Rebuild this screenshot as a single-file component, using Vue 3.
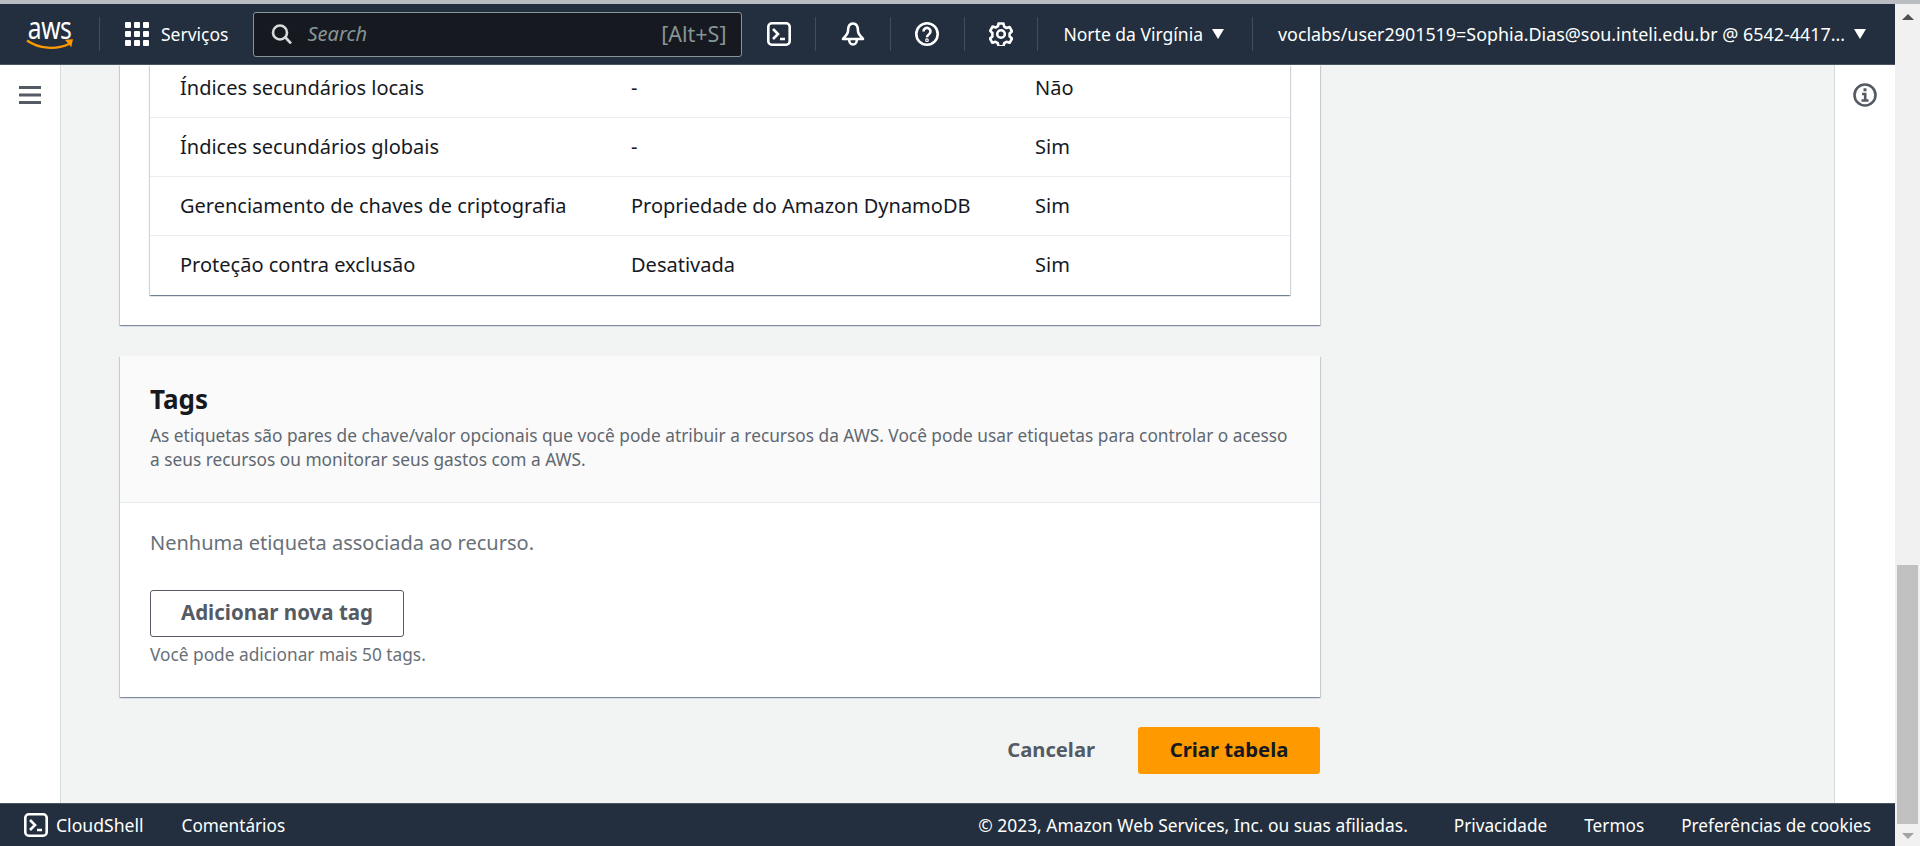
<template>
  <div class="page">
    <div class="strip" />
    <div class="shell">
      <div class="app">
        <header class="nav">
          <div class="logo">
            <span class="logo-txt">aws</span>
            <svg class="logo-smile" width="48" height="11" viewBox="0 0 48 11">
              <path d="M1 1.500c12 8.500 29 9.500 42 3.500" fill="none" stroke="#f90" stroke-width="2.200" />
              <path d="M39 .8l8-.6-1.800 8z" fill="#f90" />
            </svg>
          </div>
          <span class="sep sep-logo" />
          <svg class="grid-ic" width="24" height="24" viewBox="0 0 24 24" fill="#fff">
            <template v-for="y in [0, 9, 18]" :key="y">
              <rect v-for="x in [0, 9, 18]" :key="x" :x="x" :y="y" width="6" height="6" rx="1" />
            </template>
          </svg>
          <span class="nav-txt svc">Serviços</span>
          <div class="search">
            <svg width="22" height="20" viewBox="0 0 22 20" fill="none" stroke="#d5dbdb" stroke-width="2.600">
              <circle cx="9" cy="8.500" r="7" />
              <path d="M14 13l6 6.500" />
            </svg>
            <span class="search-ph">Search</span>
            <span class="search-key">[Alt+S]</span>
          </div>
          <svg class="ic ic-term" width="24" height="24" viewBox="0 0 24 24" fill="none" stroke="#fff" stroke-width="2.600">
            <rect x="1.300" y="1.300" width="21.400" height="21.400" rx="3.500" />
            <path d="M6 7l5 5-5 5M13 17h5" />
          </svg>
          <span class="sep sep-a" />
          <svg class="ic ic-bell" width="24" height="24" viewBox="0 0 24 24" fill="none" stroke="#fff" stroke-width="2.600">
            <path d="M12 1.500C8 1.500 7 5 7 9c0 3-2.500 5-5 8h20c-2.500-3-5-5-5-8 0-4-1-7.500-5-7.500z" stroke-linejoin="round" />
            <path d="M8.200 18a3.800 4.500 0 0 0 7.600 0" />
          </svg>
          <span class="sep sep-b" />
          <svg class="ic ic-help" width="24" height="24" viewBox="0 0 24 24" fill="none" stroke="#fff" stroke-width="2.600">
            <circle cx="12" cy="12" r="10.700" />
            <path d="M8.500 9.500a3.500 3.500 0 1 1 5.500 2.800c-1.300.9-2 1.500-2 3" />
            <circle cx="12" cy="18.200" r=".6" />
          </svg>
          <span class="sep sep-c" />
          <svg class="ic ic-gear" width="24" height="24" viewBox="0 0 24 24" fill="none" stroke="#fff" stroke-width="2.600">
            <circle cx="12" cy="12" r="3.800" />
            <path d="M9.500 1.500h5l.7 3.200 2.300 1.300 3.100-1 2.400 4.300-2.400 2.200v2.900l2.400 2.100-2.400 4.300-3.100-1-2.300 1.400-.7 3.200h-5l-.7-3.200-2.300-1.400-3.100 1-2.400-4.300 2.400-2.100V11L1.200 8.800l2.400-4.300 3.100 1L9 4.200z" stroke-linejoin="round" />
          </svg>
          <span class="sep sep-d" />
          <span class="nav-txt region">Norte da Virgínia</span>
          <span class="tri" />
          <span class="sep sep-e" />
          <span class="nav-txt account">voclabs/user2901519=Sophia.Dias@sou.inteli.edu.br @ 6542-4417...</span>
          <span class="tri" />
        </header>

        <div class="body">
          <aside class="rail rail-left">
            <svg width="22" height="18" viewBox="0 0 22 18" fill="#545b64">
              <rect width="22" height="3" />
              <rect y="7.500" width="22" height="3" />
              <rect y="15" width="22" height="3" />
            </svg>
          </aside>
          <main class="main">
            <section class="card card-settings">
              <div class="table">
                <div v-for="row in rows" :key="row[0]" class="row">
                  <span>{{ row[0] }}</span>
                  <span>{{ row[1] }}</span>
                  <span>{{ row[2] }}</span>
                </div>
              </div>
            </section>

            <section class="card card-tags">
              <div class="tags-head">
                <h2>Tags</h2>
                <p>As etiquetas são pares de chave/valor opcionais que você pode atribuir a recursos da AWS. Você pode usar etiquetas para controlar o acesso a seus recursos ou monitorar seus gastos com a AWS.</p>
              </div>
              <div class="tags-body">
                <p class="empty">Nenhuma etiqueta associada ao recurso.</p>
                <button type="button" class="btn-add">Adicionar nova tag</button>
                <p class="hint">Você pode adicionar mais 50 tags.</p>
              </div>
            </section>

            <div class="actions">
              <button type="button" class="btn-cancel">Cancelar</button>
              <button type="button" class="btn-create">Criar tabela</button>
            </div>
          </main>
          <aside class="rail rail-right">
            <svg width="24" height="24" viewBox="0 0 24 24" fill="none" stroke="#545b64" stroke-width="2.600">
              <circle cx="12" cy="12" r="10.500" />
              <path d="M9 11h3.200v6M8.500 17.500h7" />
              <path d="M10.500 6.800h3" stroke-width="3" />
            </svg>
          </aside>
        </div>

        <footer class="foot">
          <svg width="24" height="24" viewBox="0 0 24 24" fill="none" stroke="#fff" stroke-width="2.600">
            <rect x="1.300" y="1.300" width="21.400" height="21.400" rx="3.500" />
            <path d="M6 7l5 5-5 5M13 17h5" />
          </svg>
          <span class="f-shell">CloudShell</span>
          <span class="f-comments">Comentários</span>
          <span class="f-copy">© 2023, Amazon Web Services, Inc. ou suas afiliadas.</span>
          <span class="f-link f-first">Privacidade</span>
          <span class="f-link">Termos</span>
          <span class="f-link">Preferências de cookies</span>
        </footer>
      </div>

      <div class="scrollbar">
        <span class="arrow arrow-up" />
        <div class="track"><div class="thumb" /></div>
        <span class="arrow arrow-down" />
      </div>
    </div>
  </div>
</template>

<script setup>
const rows = [
  ['Índices secundários locais', '-', 'Não'],
  ['Índices secundários globais', '-', 'Sim'],
  ['Gerenciamento de chaves de criptografia', 'Propriedade do Amazon DynamoDB', 'Sim'],
  ['Proteção contra exclusão', 'Desativada', 'Sim'],
]
</script>

<style>
html, body { margin: 0; overflow: hidden; }
</style>

<style scoped>
.page {
  width: 1920px;
  height: 846px;
  display: flex;
  flex-direction: column;
  font-family: "Noto Sans", sans-serif;
  color: #16191f;
  overflow: hidden;
}
.strip {
  height: 4px;
  background: #b9bcc0;
  flex: none;
}
.shell {
  flex: 1;
  min-height: 0;
  display: flex;
}
.app {
  flex: 1;
  min-width: 0;
  display: flex;
  flex-direction: column;
}

/* barra superior */
.nav {
  height: 61px;
  flex: none;
  display: flex;
  align-items: center;
  background: #232f3e;
  color: #fff;
  border-bottom: 1px solid #4a5563;
  box-sizing: border-box;
}
.logo {
  margin-left: 26px;
  width: 48px;
  height: 32px;
  flex: none;
  display: flex;
  flex-direction: column;
  align-items: center;
}
.logo-txt {
  font-size: 30px;
  line-height: 20px;
  transform: scaleX(0.82);
  letter-spacing: -0.5px;
}
.logo-smile {
  margin-top: 1px;
  flex: none;
}
.sep {
  width: 1px;
  height: 34px;
  background: #414d5c;
  flex: none;
}
.sep-logo { margin-left: 25px; }
.grid-ic { margin-left: 25px; flex: none; }
.nav-txt {
  font-size: 17.5px;
  white-space: nowrap;
  padding-bottom: 1px;
}
.svc { margin-left: 12px; }
.search {
  margin-left: 25px;
  width: 489px;
  height: 45px;
  box-sizing: border-box;
  display: flex;
  align-items: center;
  background: #16191f;
  border: 1px solid #879596;
  border-radius: 3px;
  padding: 0 15px 0 17px;
}
.search-ph {
  margin-left: 14px;
  margin-bottom: 1px;
  font-style: italic;
  font-size: 20px;
  color: #879596;
}
.search-key {
  margin-left: auto;
  margin-bottom: 1px;
  font-size: 21.5px;
  color: #879596;
}
.ic { flex: none; }
.ic-term { margin-left: 25px; }
.sep-a { margin-left: 24px; }
.ic-bell { margin-left: 25px; }
.sep-b { margin-left: 25px; }
.ic-help { margin-left: 24px; }
.sep-c { margin-left: 25px; }
.ic-gear { margin-left: 24px; }
.sep-d { margin-left: 24px; }
.region { margin-left: 25px; }
.tri {
  flex: none;
  margin-left: 9px;
  width: 0;
  height: 0;
  border-left: 6px solid transparent;
  border-right: 6px solid transparent;
  border-top: 10px solid #fff;
}
.sep-e { margin-left: 28px; }
.account { margin-left: 25px; font-size: 17.9px; }

/* cuerpo */
.body {
  flex: 1;
  min-height: 0;
  display: flex;
  background: #f2f3f3;
}
.rail {
  width: 60px;
  flex: none;
  background: #fff;
  display: flex;
  justify-content: center;
  align-items: flex-start;
}
.rail-left {
  border-right: 1px solid #d5dbdb;
  padding-top: 21px;
}
.rail-right {
  border-left: 1px solid #d5dbdb;
  padding-top: 18px;
}
.main {
  flex: 1;
  min-width: 0;
  padding-left: 59px;
}
.card {
  width: 1200px;
  background: #fff;
  box-shadow: 0 1px 1px 0 rgba(0, 31, 63, 0.3), 1px 1px 1px 0 rgba(22, 50, 80, 0.15), -1px 1px 1px 0 rgba(22, 50, 80, 0.15);
}
.card-settings {
  padding: 0 30px 30px;
  box-sizing: border-box;
}
.table {
  background: #fff;
  box-shadow: 0 1px 1px 0 rgba(0, 31, 63, 0.4), 1px 1px 1px 0 rgba(22, 50, 80, 0.15), -1px 1px 1px 0 rgba(22, 50, 80, 0.15);
}
.row {
  height: 59px;
  box-sizing: border-box;
  display: grid;
  grid-template-columns: 451px 404px 1fr;
  align-items: center;
  padding: 0 0 2px 30px;
  font-size: 20px;
  border-bottom: 1px solid #eaeded;
}
/* fila cortada por la barra superior */
.row:first-child {
  height: 53px;
  padding-bottom: 8px;
}
.row:last-child {
  border-bottom: none;
}
.card-tags {
  margin-top: 31px;
}
.tags-head {
  background: #fafafa;
  border-bottom: 1px solid #eaeded;
  padding: 26px 30px 0;
  height: 147px;
  box-sizing: border-box;
}
.tags-head h2 {
  margin: 0;
  font-size: 26px;
  line-height: 34px;
  font-weight: 700;
}
.tags-head p {
  margin: 8px 0 0;
  font-size: 17.3px;
  line-height: 24px;
  color: #5f6870;
}
.tags-body {
  padding: 25px 30px 30px;
}
.empty {
  margin: 0;
  font-size: 20px;
  line-height: 29px;
  color: #687078;
}
.btn-add {
  display: block;
  margin-top: 33px;
  width: 254px;
  height: 47px;
  background: #fff;
  border: 1px solid #545b64;
  border-radius: 3px;
  font: 700 20.5px "Noto Sans", sans-serif;
  color: #545b64;
  padding: 0 0 3px;
}
.hint {
  margin: 6px 0 0;
  font-size: 17.3px;
  line-height: 24px;
  color: #687078;
}
.actions {
  width: 1200px;
  margin-top: 30px;
  display: flex;
  justify-content: flex-end;
  align-items: center;
}
.btn-cancel {
  background: none;
  border: none;
  padding: 0 0 3px;
  font: 700 20.2px "Noto Sans", sans-serif;
  color: #545b64;
  margin-right: 43px;
}
.btn-create {
  width: 182px;
  height: 47px;
  background: #f90;
  border: none;
  border-radius: 3px;
  padding: 0 0 3px;
  font: 700 20.3px "Noto Sans", sans-serif;
  color: #16191f;
}

/* pie */
.foot {
  height: 43px;
  flex: none;
  box-sizing: border-box;
  display: flex;
  align-items: center;
  background: #232f3e;
  color: #fff;
  border-top: 1px solid #4a5563;
  padding: 0 24px;
  font-size: 17.4px;
  white-space: nowrap;
}
.foot svg { flex: none; }
.f-shell { margin-left: 8px; font-size: 17.6px; }
.f-comments { margin-left: 38px; font-size: 17.2px; }
.f-copy { margin-left: auto; }
.f-link { margin-left: 37px; font-size: 17.2px; }
.f-link.f-first { margin-left: 46px; }

/* scrollbar */
.scrollbar {
  width: 25px;
  flex: none;
  display: flex;
  flex-direction: column;
  align-items: center;
  background: #f1f1f1;
}
.arrow {
  flex: none;
  width: 0;
  height: 0;
  border-left: 6px solid transparent;
  border-right: 6px solid transparent;
}
.arrow-up {
  margin-top: 10px;
  border-bottom: 6px solid #505050;
}
.arrow-down {
  margin-top: 9px;
  margin-bottom: 7px;
  border-top: 6px solid #a3a3a3;
}
.track {
  flex: 1;
  width: 100%;
  display: flex;
  align-items: flex-end;
  justify-content: center;
}
.thumb {
  width: 21px;
  height: 259px;
  background: #c1c1c1;
}
</style>
